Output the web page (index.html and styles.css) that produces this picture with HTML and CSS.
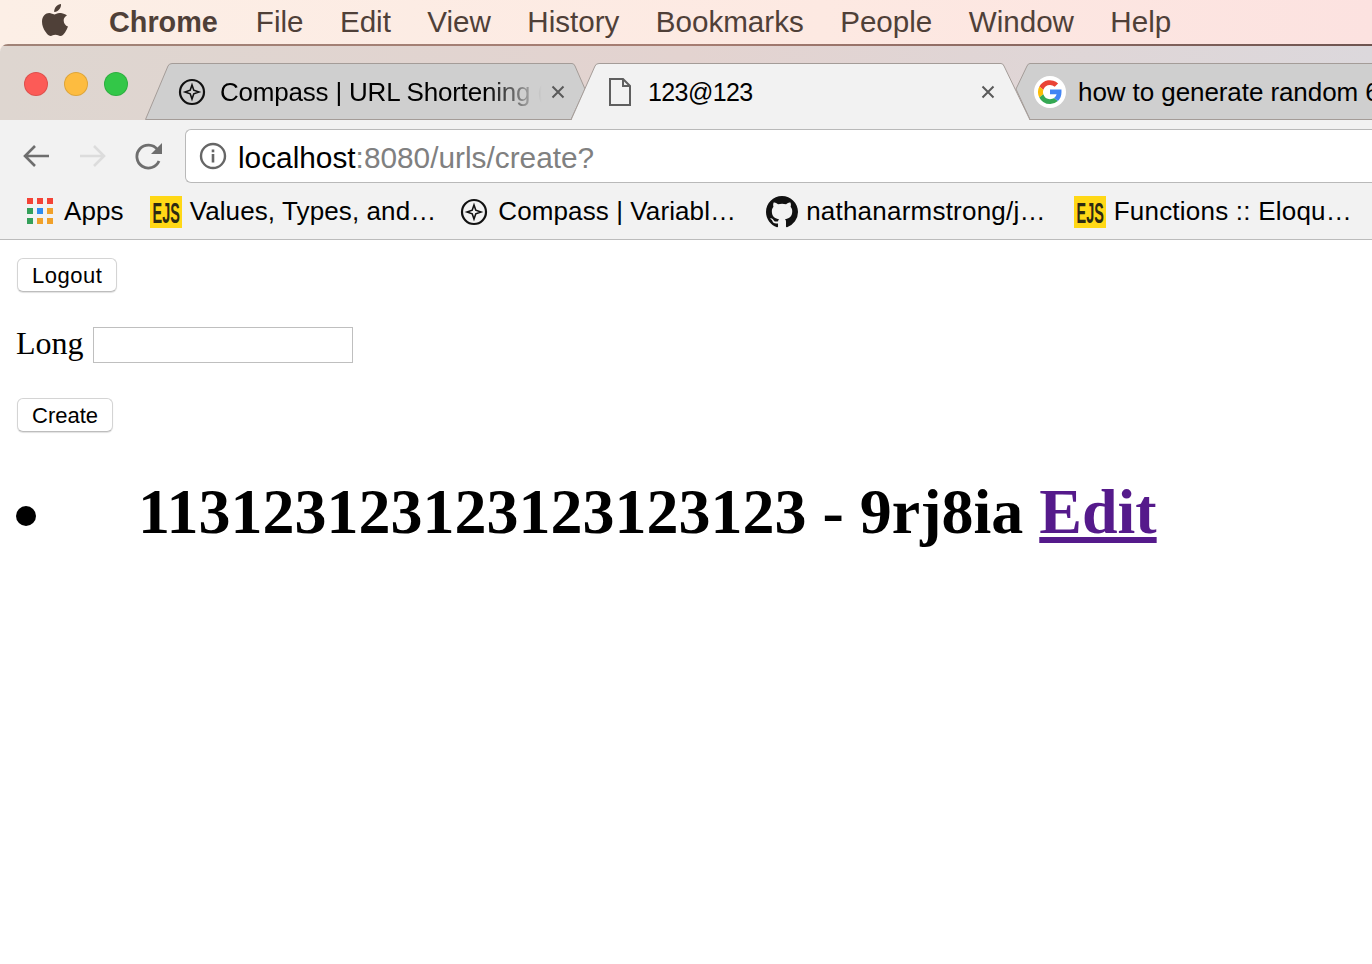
FILE: index.html
```html
<!DOCTYPE html>
<html>
<head>
<meta charset="utf-8">
<title>123@123</title>
<link rel="stylesheet" href="styles.css">
</head>
<body>

<div class="menubar">
	<svg class="apple" width="28" height="32" viewBox="0 0 28 32"><path d="M19 0c.2 2.300-.7 4.200-1.900 5.600-1.300 1.500-3.100 2.500-4.900 2.300-.2-2.200.8-4.200 1.900-5.500C15.400 1 17.400.1 19 0zM25 11.200c-2.300 1.400-3.400 3.200-3.300 5.500.1 2.800 1.700 4.800 4.300 5.900-.7 2.100-1.700 4-3 5.800-1.300 1.800-2.700 3.500-4.600 3.500-1.900 0-2.600-1.200-5-1.200-2.300 0-3.100 1.200-4.900 1.200-2 0-3.400-1.800-4.800-3.800C1.400 25.100 0 21.300 0 17.800c0-5.700 3.700-8.700 7.200-8.700 2 0 3.700 1.300 5 1.300 1.200 0 3.100-1.400 5.400-1.400 1.400 0 4.900.5 7.400 2.200z" fill="#4f4038"/></svg>
	<span class="menu-app">Chrome</span>
	<span class="menu-item">File</span>
	<span class="menu-item">Edit</span>
	<span class="menu-item">View</span>
	<span class="menu-item">History</span>
	<span class="menu-item">Bookmarks</span>
	<span class="menu-item">People</span>
	<span class="menu-item">Window</span>
	<span class="menu-item">Help</span>
</div>

<div class="tabstrip">
	<svg class="tab-shapes" width="1372" height="76" viewBox="0 0 1372 76">
		<path d="M145.500 75.500 L168 22 Q169 19.500 172 19.500 L572 19.500 Q574 19.500 575 22 L585 45 L571 75.500 Z" fill="#cfcfcf" stroke="#a49c98"/>
		<path d="M1372 19.500 L1030 19.500 Q1028 19.500 1027 22 L1016 45 L1030 75.500 L1372 75.500" fill="#cfcfcf" stroke="#a49c98"/>
		<path d="M571 76 L595 22 Q596 19.500 599 19.500 L1001 19.500 Q1003 19.500 1004 22 L1030 76 Z" fill="#f2f2f2" stroke="#a49c98"/>
		<path d="M572 75.500 L1029 75.500" stroke="#f2f2f2"/>
	</svg>
	<div class="lights">
		<span class="light light-red"></span>
		<span class="light light-yellow"></span>
		<span class="light light-green"></span>
	</div>
	<div class="tab tab-first">
		<svg class="compass" width="28" height="28" viewBox="0 0 28 28"><circle cx="14" cy="14" r="12" fill="none" stroke="#111" stroke-width="2.200"/><path d="M14 7l1.800 5.200L21 14l-5.200 1.800L14 21l-1.800-5.200L7 14l5.200-1.800z" fill="none" stroke="#111" stroke-width="1.600"/></svg>
		<span class="tab-title tab-title-fade">Compass | URL Shortening (</span>
		<svg class="tab-close" width="14" height="14" viewBox="0 0 14 14"><path d="M1.500 1.500l11 11M12.500 1.500l-11 11" stroke="#5a5a5a" stroke-width="2"/></svg>
	</div>
	<div class="tab tab-active">
		<svg width="22" height="28" viewBox="0 0 22 28"><path d="M1 1h13l7 7v19H1z M14 1v7h7" fill="none" stroke="#5f5f5f" stroke-width="2"/></svg>
		<span class="tab-title">123@123</span>
		<svg class="tab-close" width="14" height="14" viewBox="0 0 14 14"><path d="M1.500 1.500l11 11M12.500 1.500l-11 11" stroke="#5a5a5a" stroke-width="2"/></svg>
	</div>
	<div class="tab tab-last">
		<svg class="google" width="32" height="32" viewBox="0 0 32 32">
			<circle cx="16" cy="16" r="16" fill="#fff"/>
			<path d="M16 9a7 7 0 0 1 4.700 1.800l3.400-3.400A12 12 0 0 0 5.300 10.600l4 3.100A7.200 7.200 0 0 1 16 9z" fill="#ea4335"/>
			<path d="M9.300 13.700l-4-3.100a12 12 0 0 0 0 10.800l4-3.100a7.200 7.200 0 0 1 0-4.600z" fill="#fbbc05"/>
			<path d="M16 23.200a7.200 7.200 0 0 1-6.700-4.900l-4 3.100A12 12 0 0 0 16 28a11.500 11.500 0 0 0 7.900-2.900l-3.800-3c-1 .7-2.400 1.100-4.100 1.100z" fill="#34a853"/>
			<path d="M27.500 13.500H16v4.800h6.600a5.700 5.700 0 0 1-2.500 3.800l3.800 3c2.300-2.100 3.600-5.200 3.600-9 0-.9-.1-1.800 0-2.600z" fill="#4285f4"/>
		</svg>
		<span class="tab-title">how to generate random 6</span>
	</div>
</div>

<div class="toolbar">
	<svg class="nav-icon" width="30" height="30" viewBox="0 0 30 30"><path d="M28 15H4M14 5L4 15l10 10" fill="none" stroke="#6e6e6e" stroke-width="2.600"/></svg>
	<svg class="nav-icon" width="30" height="30" viewBox="0 0 30 30"><path d="M2 15h24M16 5l10 10-10 10" fill="none" stroke="#dcdcdc" stroke-width="2.600"/></svg>
	<svg class="nav-icon" width="30" height="30" viewBox="0 0 30 30"><path d="M24 20a11.500 11.500 0 1 1-1.500-11.500" fill="none" stroke="#6e6e6e" stroke-width="2.800"/><path d="M27 2v11H16z" fill="#6e6e6e"/></svg>
	<div class="omnibox">
		<svg width="28" height="28" viewBox="0 0 28 28"><circle cx="14" cy="14" r="12" fill="none" stroke="#666" stroke-width="2.400"/><rect x="12.700" y="12" width="2.600" height="8.500" fill="#666"/><rect x="12.700" y="7.500" width="2.600" height="2.800" fill="#666"/></svg>
		<span class="url"><span class="url-host">localhost</span>:8080/urls/create?</span>
	</div>
</div>

<div class="bookmarks">
	<div class="bookmark bookmark-apps">
		<svg width="27" height="27" viewBox="0 0 27 27">
			<rect x="0" y="0" width="6" height="6" fill="#f44336"/><rect x="10" y="0" width="6" height="6" fill="#f44336"/><rect x="20" y="0" width="6" height="6" fill="#f44336"/>
			<rect x="0" y="10" width="6" height="6" fill="#34a05a"/><rect x="10" y="10" width="6" height="6" fill="#2f8cf0"/><rect x="20" y="10" width="6" height="6" fill="#f1a12a"/>
			<rect x="0" y="20" width="6" height="6" fill="#34a05a"/><rect x="10" y="20" width="6" height="6" fill="#f1a12a"/><rect x="20" y="20" width="6" height="6" fill="#f1a12a"/>
		</svg>
		<span>Apps</span>
	</div>
	<div class="bookmark bookmark-ejs bookmark-tight">
		<svg class="ejs" width="32" height="32" viewBox="0 0 32 32"><rect width="32" height="32" fill="#ffd816"/><text transform="translate(2.500 27) scale(0.480 1)" class="ejs-text">EJS</text></svg>
		<span>Values, Types, and…</span>
	</div>
	<div class="bookmark bookmark-wide">
		<svg width="28" height="28" viewBox="0 0 28 28"><circle cx="14" cy="14" r="12" fill="none" stroke="#111" stroke-width="2.200"/><path d="M14 7l1.800 5.200L21 14l-5.200 1.800L14 21l-1.800-5.200L7 14l5.200-1.800z" fill="none" stroke="#111" stroke-width="1.600"/></svg>
		<span>Compass | Variabl…</span>
	</div>
	<div class="bookmark bookmark-github bookmark-ejs">
		<svg width="32" height="32" viewBox="0 0 16 16"><path d="M8 0C3.580 0 0 3.580 0 8c0 3.540 2.290 6.530 5.470 7.590.4.070.55-.17.55-.38 0-.19-.01-.82-.01-1.490-2.010.37-2.530-.49-2.690-.94-.09-.23-.48-.94-.82-1.130-.28-.15-.68-.52-.01-.53.630-.01 1.080.58 1.230.82.720 1.210 1.870.87 2.330.66.070-.52.280-.87.510-1.070-1.780-.2-3.640-.89-3.640-3.950 0-.87.310-1.590.82-2.150-.08-.2-.36-1.020.08-2.120 0 0 .67-.21 2.200.82.640-.18 1.320-.27 2-.27s1.360.09 2 .27c1.530-1.040 2.200-.82 2.200-.82.44 1.100.16 1.920.08 2.120.51.560.82 1.270.82 2.150 0 3.070-1.870 3.750-3.650 3.950.29.250.54.730.54 1.480 0 1.070-.01 1.930-.01 2.200 0 .21.150.46.550.38A8.010 8.010 0 0 0 16 8c0-4.420-3.580-8-8-8z" fill="#111"/></svg>
		<span class="bookmark-spaced">nathanarmstrong/j…</span>
	</div>
	<div class="bookmark bookmark-ejs">
		<svg class="ejs" width="32" height="32" viewBox="0 0 32 32"><rect width="32" height="32" fill="#ffd816"/><text transform="translate(2.500 27) scale(0.480 1)" class="ejs-text">EJS</text></svg>
		<span class="bookmark-spaced">Functions :: Eloqu…</span>
	</div>
</div>

<div class="page">
	<button class="btn btn-logout">Logout</button>
	<div class="field">
		<label class="field-label">Long</label>
		<input class="field-input" type="text">
	</div>
	<button class="btn">Create</button>
	<div class="url-row">
		<span class="bullet"></span>
		<h1 class="url-line">113123123123123123123 - 9rj8ia <a class="url-edit" href="#">Edit</a></h1>
	</div>
</div>

</body>
</html>
```

FILE: styles.css
```css
body {
	margin: 0;
	background-color: #fff;
	font-family: "Liberation Sans", Arial, sans-serif;
	color: #000;
	overflow: hidden;
}

.menubar {
	height: 50px;
	display: flex;
	align-items: center;
	padding: 0 0 6px 42px;
	box-sizing: border-box;
	background: linear-gradient(90deg, #fcefe6, #fde9e2 60%, #fce2e0);
	color: #4f4038;
	font-size: 29.600px;
}

.apple {
	margin: -4px 39px 0 0;
}

.menu-app {
	font-size: 28.800px;
	font-weight: bold;
	margin-right: 38px;
}

.menu-item {
	margin-right: 36.400px;
}

.tabstrip {
	position: relative;
	height: 76px;
	margin-top: -6px;
	display: flex;
	box-sizing: border-box;
	border-radius: 8px 0 0 0;
	background:
		linear-gradient(90deg, #a08377, #a67d72 50%, #6e5450) top / 100% 2px no-repeat,
		linear-gradient(90deg, #ded6d0, #e3d3d0 50%, #dcd8dc);
}

.tab-shapes {
	position: absolute;
	left: 0;
	top: 0;
}

.lights {
	position: relative;
	display: flex;
	gap: 16px;
	padding: 28px 0 0 24px;
	width: 154px;
	box-sizing: border-box;
}

.light {
	width: 24px;
	height: 24px;
	border-radius: 50%;
	box-sizing: border-box;
	border: 1px solid rgba(0, 0, 0, 0.12);
}

.light-red { background-color: #fc5b57; }
.light-yellow { background-color: #fdbc40; }
.light-green { background-color: #33c748; }

.tab {
	position: relative;
	display: flex;
	align-items: center;
	height: 56px;
	margin-top: 20px;
	font-size: 26px;
	white-space: nowrap;
}

.tab-first {
	width: 425px;
	padding-left: 24px;
	box-sizing: border-box;
}

.tab-active {
	width: 455px;
	padding-left: 30px;
	box-sizing: border-box;
}

.tab-last {
	flex: 1;
	min-width: 0;
}

.google {
	flex: none;
}

.tab-title {
	margin-left: 14px;
	overflow: hidden;
}

.tab-title-fade {
	flex: none;
	width: 325px;
	margin-left: 14px;
	letter-spacing: -0.200px;
	-webkit-mask-image: linear-gradient(90deg, #000 82%, transparent 99%);
	mask-image: linear-gradient(90deg, #000 82%, transparent 99%);
}

.tab-first .tab-close {
	margin-left: 6px;
}

.tab-active .tab-title {
	margin-left: 17px;
	flex: 1;
	font-size: 25px;
	letter-spacing: -0.600px;
}

.tab-close {
	flex: none;
	margin-left: 6px;
}

.tab-active .tab-close {
	margin-right: 39px;
}

.tab-last .tab-title {
	margin-left: 12px;
	letter-spacing: -0.080px;
}

.toolbar {
	height: 64px;
	display: flex;
	align-items: center;
	box-sizing: border-box;
	padding: 8px 0 0 21px;
	background-color: #f2f2f2;
}

.nav-icon {
	margin-right: 27px;
}

.omnibox {
	flex: 1;
	display: flex;
	align-items: center;
	height: 54px;
	margin-left: -7px;
	padding-left: 13px;
	box-sizing: border-box;
	background-color: #fff;
	border: 1px solid #b9b9b9;
	border-right: none;
	border-radius: 6px 0 0 6px;
}

.url {
	margin: 3px 0 0 11px;
	font-size: 29.800px;
	color: #808080;
}

.url-host {
	color: #000;
}

.bookmarks {
	height: 56px;
	display: flex;
	align-items: center;
	background-color: #f2f2f2;
	border-bottom: 1px solid #bcbcbc;
	box-sizing: border-box;
	padding-left: 27px;
	font-size: 26px;
	letter-spacing: 0.100px;
	white-space: nowrap;
}

.bookmark {
	display: flex;
	align-items: center;
	gap: 10px;
	margin-right: 26px;
}

.bookmark-tight {
	margin-right: 24px;
}

.bookmark-wide {
	margin-right: 30px;
}

.bookmark-github {
	margin-right: 28px;
}

.bookmark-ejs {
	gap: 8px;
}

.bookmark-spaced {
	letter-spacing: 0.220px;
}

.ejs {
	flex: none;
}

.ejs-text {
	font-size: 30px;
	font-weight: bold;
	fill: #2c2a12;
}

.page {
	padding: 18px 16px 0 17px;
}

.btn {
	display: block;
	height: 34px;
	padding: 2px 14px 0;
	background-color: #fff;
	border: 1px solid #d4d4d4;
	border-bottom-color: #bdbdbd;
	border-radius: 6px;
	box-shadow: 0 1px 1px rgba(0, 0, 0, 0.12);
	font-family: "Liberation Sans", sans-serif;
	font-size: 22px;
	color: #000;
}

.btn-logout {
	letter-spacing: 0.500px;
}

.field {
	display: flex;
	align-items: center;
	gap: 9px;
	margin: 35px 0 35px -1px;
}

.field-label {
	margin-top: -4px;
	font-family: "Liberation Serif", serif;
	font-size: 32px;
}

.field-input {
	width: 260px;
	height: 36px;
	box-sizing: border-box;
	border: 1px solid #bfbfbf;
	padding: 0;
	margin: 0;
}

.url-row {
	display: flex;
	align-items: center;
	margin: 43px 0 0 -1px;
}

.bullet {
	width: 20px;
	height: 20px;
	margin: 8px 102px 0 0;
	border-radius: 50%;
	background-color: #000;
	flex: none;
}

.url-line {
	margin: 0;
	font-family: "Liberation Serif", serif;
	font-size: 64px;
	line-height: 74px;
	font-weight: bold;
	white-space: nowrap;
}

.url-edit {
	color: #551a8b;
}
```
